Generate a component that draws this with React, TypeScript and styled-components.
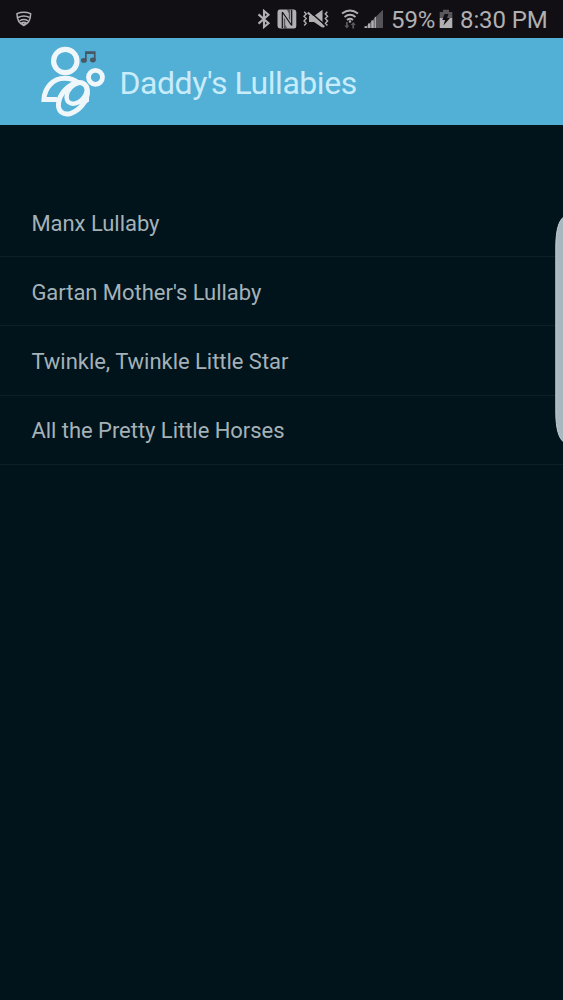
import React from "react";
import styled, { createGlobalStyle } from "styled-components";

const GlobalStyle = createGlobalStyle`
  * { box-sizing: border-box; }
  body { margin: 0; background: #01131b; }
`;

const Screen = styled.div`
  position: relative;
  display: flex;
  flex-direction: column;
  width: 563px;
  height: 1000px;
  overflow: hidden;
  background: #01131b;
  font-family: Roboto, "Liberation Sans", sans-serif;
`;

const StatusBar = styled.header`
  display: flex;
  align-items: center;
  height: 38px;
  padding: 0 16px;
  background: #110f14;
  color: #b0afb2;
`;

const StatusIcon = styled.svg<{ $gap?: number }>`
  display: block;
  flex: none;
  margin-left: ${(p) => p.$gap ?? 0}px;
`;

const Spacer = styled.div`
  flex: 1;
`;

const StatusText = styled.span<{ $gap: number; $width: number }>`
  flex: none;
  width: ${(p) => p.$width}px;
  margin-left: ${(p) => p.$gap}px;
  padding-top: 2px;
  font-size: 24px;
  line-height: 28px;
  letter-spacing: -0.1px;
  white-space: nowrap;
`;

const AppBar = styled.div`
  display: flex;
  align-items: center;
  height: 87px;
  padding-left: 30px;
  background: #52afd6;
`;

const Title = styled.h1`
  margin: 0;
  padding-top: 3px;
  font-size: 32px;
  font-weight: 400;
  line-height: 40px;
  letter-spacing: -0.46px;
  text-indent: -0.5px;
  color: #c8ecfa;
  white-space: nowrap;
`;

const SongList = styled.ul`
  margin: 0;
  padding: 63px 0 0;
  list-style: none;
`;

const Song = styled.li`
  display: flex;
  align-items: center;
  height: 69.2px;
  padding: 2px 0 0 31.400px;
  border-bottom: 1px solid #0b2028;
  font-size: 22px;
  letter-spacing: -0.035px;
  color: #a4b2b8;
`;

const EdgeHandle = styled.svg`
  position: absolute;
  top: 216px;
  right: 0;
`;

const Logo = () => (
  <svg width="90" height="87" viewBox="0 2 90 87" fill="none" stroke="#f0f7fb">
    <circle cx="35.300" cy="25" r="11.700" strokeWidth="5.200" />
    <circle cx="65.500" cy="41.300" r="7" strokeWidth="4.800" />
    <path d="M27 63.400H14C14.500 52 23 42.300 34.500 42.300c6 0 10.500 1.500 14 5" strokeWidth="5" />
    <ellipse cx="43" cy="62.300" rx="18" ry="11.500" transform="rotate(-50 43 62.300)" strokeWidth="5" />
    <ellipse cx="46.700" cy="57.300" rx="12" ry="8.200" transform="rotate(-48 46.700 57.300)" strokeWidth="4.400" />
    <path d="M57.300 54v10.500l-7 4.500" strokeWidth="3.500" />
    <g stroke="none" fill="#4a5764">
      <path d="M55 15.200h10.600v8.800h-1.700v-6h-7.200v6.500H55z" />
      <ellipse cx="53.900" cy="24.400" rx="2.900" ry="2.400" />
      <ellipse cx="62.900" cy="24" rx="2.900" ry="2.400" />
    </g>
  </svg>
);

const ShieldIcon = () => (
  <StatusIcon width="16" height="16" viewBox="0 0 16 16" fill="none" stroke="currentColor" strokeWidth="1.500">
    <path d="M1 2.600Q7.800-.2 14.600 2.600C14.700 8.500 12 12.700 7.800 14.500 3.600 12.700.9 8.500 1 2.600z" />
    <path d="M2 6.500q5.800-3 11.600 0M3.600 9.800q4.200-2.600 8.400 0" />
    <path d="M5.500 12q2.300-1.500 4.600 0l-2.300 1.600z" />
  </StatusIcon>
);

const BluetoothIcon = () => (
  <StatusIcon width="14" height="20" viewBox="0 0 14 20" fill="none" stroke="currentColor" strokeWidth="2.100">
    <path d="M1.500 5.400l10 8.800-4.500 3.800V2l4.500 3.800-10 8.800" />
  </StatusIcon>
);

const NfcIcon = () => (
  <StatusIcon $gap={6} width="20" height="20" viewBox="0 0 20 20">
    <path fill="currentColor" d="M2.500.5H17Q19.300.7 19.300 3v14q0 2.500-2.300 2.500H3Q.5 19.300.5 17V3Q.5.5 2.500.5z" />
    <path fill="none" stroke="#110f14" strokeWidth="1.200" d="M5.300 19V3.500M14.700 1v15.500M5.300 3l9.400 13.500" />
    <path fill="#110f14" d="M8.200 10.500v5.200l2 3.800H6.800V8.500zM11.800 9.500V4.300L9.800.5h3.400v11z" opacity=".55" />
  </StatusIcon>
);

const MutedIcon = () => (
  <StatusIcon $gap={5} width="29" height="20" viewBox="0 0 29 20" fill="none" stroke="currentColor">
    <path stroke="none" fill="currentColor" d="M7 7h5l8.500-6.300v18L12 13H7z" />
    <path stroke="#110f14" strokeWidth="1.500" d="M8 2.800l15 13.500" />
    <path strokeWidth="2.300" d="M5.700 3.500l16.500 14.500" />
    <path strokeWidth="1.400" d="M2 3.500l2 2.300-2.300 2.300 2.200 2.300-2.200 2.300 2.200 2.300-2 2.300M25 3.500l-2 2.300L25.300 8.100 23.100 10.400l2.200 2.300-2.200 2.300 2 2.300" transform="translate(.3 -.8)" />
  </StatusIcon>
);

const WifiIcon = () => (
  <StatusIcon $gap={10} width="18" height="20" viewBox="0 0 18 20" fill="none" stroke="currentColor" strokeWidth="1.900">
    <path d="M1 4.600q8-6.400 16 0M3.500 7.900q5.500-4.400 11 0M6 11q3-2.400 6 0" />
    <circle cx="9" cy="12.500" r="1.200" fill="currentColor" stroke="none" />
    <g stroke="none" fill="#59575c">
      <path d="M5 13h1.800v3.500h1.700L5.900 19.500l-2.600-3H5zM11.300 19.500h1.800V16h1.700l-2.600-3-2.600 3h1.700z" />
    </g>
  </StatusIcon>
);

const SignalIcon = () => (
  <StatusIcon $gap={5} width="20" height="20" viewBox="0 0 20 20">
    <path fill="#555358" d="M19 .7v18.300H.5z" />
    <path fill="currentColor" d="M.5 17.300H3V19H.5zM4 14.500h2.300V19H4zM7.300 11.500h2.400V19H7.300zM10.600 8.500l1.300-1V19h-1.300z" />
  </StatusIcon>
);

const BatteryIcon = () => (
  <StatusIcon $gap={5} width="14" height="20" viewBox="0 0 14 20">
    <path fill="#59575c" d="M4 .8h6v2.200h3.300V9H.7V3H4z" />
    <path fill="currentColor" d="M.7 9h12.600v10H.7z" />
    <path fill="#110f14" d="M5.500 5h4L8 9h3L4.500 16.500l1.500-5.500H3.300z" />
  </StatusIcon>
);

const songs = [
  "Manx Lullaby",
  "Gartan Mother's Lullaby",
  "Twinkle, Twinkle Little Star",
  "All the Pretty Little Horses",
];

export default function App() {
  return (
    <Screen>
      <GlobalStyle />
      <StatusBar>
        <ShieldIcon />
        <Spacer />
        <BluetoothIcon />
        <NfcIcon />
        <MutedIcon />
        <WifiIcon />
        <SignalIcon />
        <StatusText $gap={7} $width={43}>59%</StatusText>
        <BatteryIcon />
        <StatusText $gap={7} $width={87}>8:30 PM</StatusText>
      </StatusBar>
      <AppBar>
        <Logo />
        <Title>Daddy's Lullabies</Title>
      </AppBar>
      <SongList>
        {songs.map((song) => (
          <Song key={song}>{song}</Song>
        ))}
      </SongList>
      <EdgeHandle width="8" height="227" viewBox="0 0 8 227">
        <path fill="#a9b7bf" stroke="#c3ced3" d="M9 .8C4 4 .8 14 .8 31v165c0 17 3.200 27 8.200 30.200z" />
      </EdgeHandle>
    </Screen>
  );
}
